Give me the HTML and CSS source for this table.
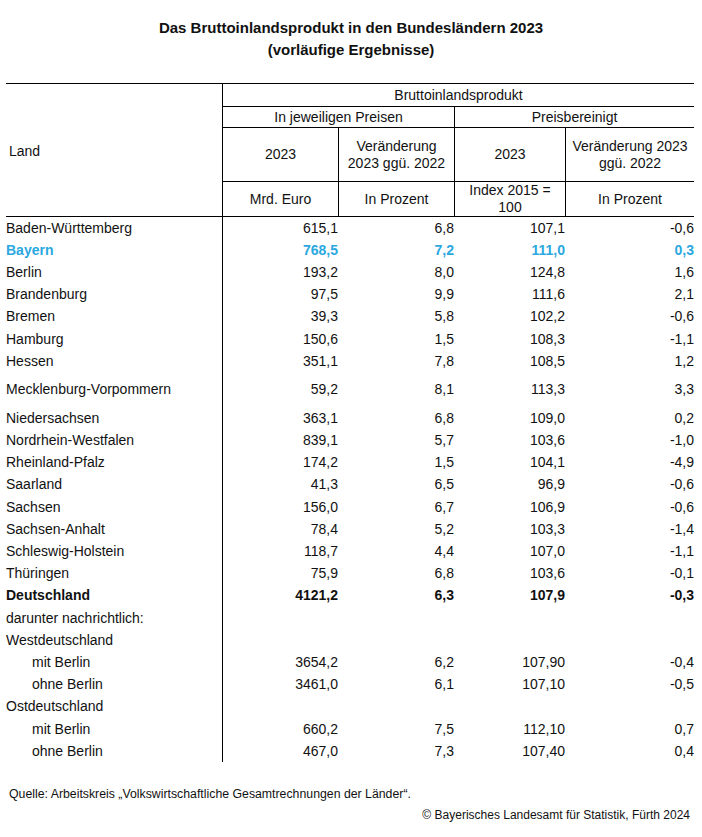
FILE: index.html
```html
<!DOCTYPE html>
<html lang="de">
<head>
<meta charset="utf-8">
<title>Das Bruttoinlandsprodukt in den Bundesländern 2023</title>
<link rel="stylesheet" href="styles.css">
</head>
<body>
<div class="page">
  <h1 class="title">Das Bruttoinlandsprodukt in den Bundesländern 2023<br>(vorläufige Ergebnisse)</h1>

  <table class="bip">
    <colgroup>
      <col class="col-land">
      <col class="col-a">
      <col class="col-b">
      <col class="col-c">
      <col class="col-d">
    </colgroup>
    <thead>
      <tr class="hr1">
        <th rowspan="4" class="land-head">Land</th>
        <th colspan="4" class="grp">Bruttoinlandsprodukt</th>
      </tr>
      <tr class="hr2">
        <th colspan="2" class="grp">In jeweiligen Preisen</th>
        <th colspan="2" class="grp sep">Preisbereinigt</th>
      </tr>
      <tr class="hr3">
        <th class="grp">2023</th>
        <th class="grp sep">Veränderung<br>2023 ggü. 2022</th>
        <th class="grp sep">2023</th>
        <th class="grp sep">Veränderung 2023<br>ggü. 2022</th>
      </tr>
      <tr class="hr4">
        <th class="unit">Mrd. Euro</th>
        <th class="unit sep">In Prozent</th>
        <th class="unit sep">Index 2015 =<br>100</th>
        <th class="unit sep">In Prozent</th>
      </tr>
    </thead>
    <tbody>
      <tr><td class="land">Baden-Württemberg</td><td class="va">615,1</td><td class="vb">6,8</td><td class="vc">107,1</td><td class="vd">-0,6</td></tr>
      <tr class="hl"><td class="land">Bayern</td><td class="va">768,5</td><td class="vb">7,2</td><td class="vc">111,0</td><td class="vd">0,3</td></tr>
      <tr><td class="land">Berlin</td><td class="va">193,2</td><td class="vb">8,0</td><td class="vc">124,8</td><td class="vd">1,6</td></tr>
      <tr><td class="land">Brandenburg</td><td class="va">97,5</td><td class="vb">9,9</td><td class="vc">111,6</td><td class="vd">2,1</td></tr>
      <tr><td class="land">Bremen</td><td class="va">39,3</td><td class="vb">5,8</td><td class="vc">102,2</td><td class="vd">-0,6</td></tr>
      <tr><td class="land">Hamburg</td><td class="va">150,6</td><td class="vb">1,5</td><td class="vc">108,3</td><td class="vd">-1,1</td></tr>
      <tr><td class="land">Hessen</td><td class="va">351,1</td><td class="vb">7,8</td><td class="vc">108,5</td><td class="vd">1,2</td></tr>
      <tr class="tall"><td class="land">Mecklenburg-Vorpommern</td><td class="va">59,2</td><td class="vb">8,1</td><td class="vc">113,3</td><td class="vd">3,3</td></tr>
      <tr><td class="land">Niedersachsen</td><td class="va">363,1</td><td class="vb">6,8</td><td class="vc">109,0</td><td class="vd">0,2</td></tr>
      <tr><td class="land">Nordrhein-Westfalen</td><td class="va">839,1</td><td class="vb">5,7</td><td class="vc">103,6</td><td class="vd">-1,0</td></tr>
      <tr><td class="land">Rheinland-Pfalz</td><td class="va">174,2</td><td class="vb">1,5</td><td class="vc">104,1</td><td class="vd">-4,9</td></tr>
      <tr><td class="land">Saarland</td><td class="va">41,3</td><td class="vb">6,5</td><td class="vc">96,9</td><td class="vd">-0,6</td></tr>
      <tr><td class="land">Sachsen</td><td class="va">156,0</td><td class="vb">6,7</td><td class="vc">106,9</td><td class="vd">-0,6</td></tr>
      <tr><td class="land">Sachsen-Anhalt</td><td class="va">78,4</td><td class="vb">5,2</td><td class="vc">103,3</td><td class="vd">-1,4</td></tr>
      <tr><td class="land">Schleswig-Holstein</td><td class="va">118,7</td><td class="vb">4,4</td><td class="vc">107,0</td><td class="vd">-1,1</td></tr>
      <tr><td class="land">Thüringen</td><td class="va">75,9</td><td class="vb">6,8</td><td class="vc">103,6</td><td class="vd">-0,1</td></tr>
      <tr class="total"><td class="land">Deutschland</td><td class="va">4121,2</td><td class="vb">6,3</td><td class="vc">107,9</td><td class="vd">-0,3</td></tr>
      <tr><td class="land">darunter nachrichtlich:</td><td class="va"></td><td class="vb"></td><td class="vc"></td><td class="vd"></td></tr>
      <tr><td class="land">Westdeutschland</td><td class="va"></td><td class="vb"></td><td class="vc"></td><td class="vd"></td></tr>
      <tr><td class="land sub">mit Berlin</td><td class="va">3654,2</td><td class="vb">6,2</td><td class="vc">107,90</td><td class="vd">-0,4</td></tr>
      <tr><td class="land sub">ohne Berlin</td><td class="va">3461,0</td><td class="vb">6,1</td><td class="vc">107,10</td><td class="vd">-0,5</td></tr>
      <tr><td class="land">Ostdeutschland</td><td class="va"></td><td class="vb"></td><td class="vc"></td><td class="vd"></td></tr>
      <tr><td class="land sub">mit Berlin</td><td class="va">660,2</td><td class="vb">7,5</td><td class="vc">112,10</td><td class="vd">0,7</td></tr>
      <tr><td class="land sub">ohne Berlin</td><td class="va">467,0</td><td class="vb">7,3</td><td class="vc">107,40</td><td class="vd">0,4</td></tr>
    </tbody>
  </table>

  <footer class="notes">
    <p class="source">Quelle: Arbeitskreis „Volkswirtschaftliche Gesamtrechnungen der Länder“.</p>
    <p class="copy">© Bayerisches Landesamt für Statistik, Fürth 2024</p>
  </footer>
</div>
</body>
</html>
```

FILE: styles.css
```css
html, body {
  margin: 0;
  padding: 0;
  background: #ffffff;
}

body {
  font-family: "Liberation Sans", Arial, sans-serif;
  color: #111111;
}

.page {
  width: 702px;
  height: 837px;
  box-sizing: border-box;
  padding-top: 17px;
}

.title {
  margin: 0 0 22px 0;
  font-size: 15px;
  line-height: 22px;
  font-weight: bold;
  text-align: center;
}

.bip {
  margin-left: 6px;
  width: 688px;
  table-layout: fixed;
  border-collapse: separate;
  border-spacing: 0;
  font-size: 14px;
  line-height: 17px;
}

.col-land { width: 217px; }
.col-a { width: 115px; }
.col-b { width: 116px; }
.col-c { width: 111px; }
.col-d { width: 129px; }

.bip th,
.bip td {
  padding: 0;
  font-weight: normal;
  box-sizing: border-box;
}

.bip thead th {
  text-align: center;
  vertical-align: middle;
}

.hr1 th {
  height: 24px;
  border-top: 1px solid #000;
}

.hr2 th { height: 21px; }
.hr3 th { height: 54px; }
.hr4 th { height: 35px; }

.grp {
  border-bottom: 1px solid #000;
}

.sep {
  border-left: 1px solid #000;
}

.hr4 th,
.bip thead .land-head {
  border-bottom: 1px solid #000;
}

.bip thead .land-head {
  text-align: left;
  padding-left: 3px;
  padding-top: 3px;
}

.land-head,
.land {
  border-right: 1px solid #000;
}

.bip tbody tr {
  height: 22.2px;
}

.bip tbody tr.tall {
  height: 35px;
}

.bip td {
  vertical-align: middle;
  white-space: nowrap;
}

.land {
  text-align: left;
  padding-left: 3px;
}

.land.sub {
  padding-left: 26px;
}

.va, .vb, .vc, .vd {
  text-align: right;
}

.va { padding-right: 3px; }
.vb { padding-right: 4px; }
.vc { padding-right: 15px; }
.vd { padding-right: 4px; }

.hl td {
  color: #2aa8df;
  font-weight: bold;
}

.total td {
  font-weight: bold;
}

.notes {
  margin-top: 22px;
  font-size: 12px;
  line-height: 21px;
}

.notes p {
  margin: 0;
}

.source {
  padding-left: 9px;
  font-size: 12.3px;
}

.copy {
  text-align: right;
  padding-right: 12px;
}
```
